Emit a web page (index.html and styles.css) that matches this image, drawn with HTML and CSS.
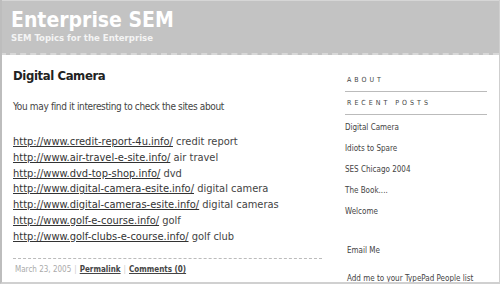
FILE: index.html
```html
<!DOCTYPE html>
<html lang="en">
<head>
  <meta charset="UTF-8">
  <title>Enterprise SEM</title>
  <link rel="stylesheet" href="styles.css">
</head>
<body>
  <div class="page">
    <div class="banner">
      <h1 class="banner-title">Enterprise SEM</h1>
      <div class="banner-sub">SEM Topics for the Enterprise</div>
    </div>

    <div class="layout">
      <div class="content">
        <h2 class="entry-title">Digital Camera</h2>
        <p class="entry-intro">You may find it interesting to check the sites about</p>
        <div class="entry-links">
          <div><a href="#">http://www.credit-report-4u.info/</a> credit report</div>
          <div><a href="#">http://www.air-travel-e-site.info/</a> air travel</div>
          <div><a href="#">http://www.dvd-top-shop.info/</a> dvd</div>
          <div><a href="#">http://www.digital-camera-esite.info/</a> digital camera</div>
          <div><a href="#">http://www.digital-cameras-esite.info/</a> digital cameras</div>
          <div><a href="#">http://www.golf-e-course.info/</a> golf</div>
          <div><a href="#">http://www.golf-clubs-e-course.info/</a> golf club</div>
        </div>
        <div class="entry-footer">
          <span class="date">March 23, 2005</span><span class="sep">|</span><a href="#">Permalink</a><span class="sep">|</span><a href="#">Comments (0)</a>
        </div>
      </div>

      <div class="sidebar">
        <div class="side-head">About</div>
        <div class="side-head">Recent Posts</div>
        <ul class="side-list">
          <li>Digital Camera</li>
          <li>Idiots to Spare</li>
          <li>SES Chicago 2004</li>
          <li>The Book....</li>
          <li>Welcome</li>
        </ul>
        <div class="side-note">Email Me</div>
        <div class="side-note">Add me to your TypePad People list</div>
      </div>
    </div>
  </div>
</body>
</html>
```

FILE: styles.css
```css
body {
  margin: 0;
  background: #fff;
  font-family: "DejaVu Sans Condensed", "DejaVu Sans", sans-serif;
  color: #444;
  overflow: hidden;
}
.page {
  width: 497px;
  height: 282px;
  border-left: 2px solid #bdbdbd;
  border-right: 1px solid #cfcfcf;
  border-bottom: 2px solid #d0d0d0;
  overflow: hidden;
}
.banner {
  background: #c3c3c3;
  border-top: 1px solid #d6d6d6;
  border-bottom: 2px dashed #d8d8d8;
  height: 52px;
  padding-left: 11px;
  margin-left: -2px;
}
.banner-title {
  margin: 0;
  padding-top: 7px;
  font-size: 21px;
  font-weight: bold;
  color: #fff;
  line-height: 24px;
}
.banner-sub {
  font-size: 9.5px;
  font-weight: bold;
  color: #f4f4f4;
  line-height: 11px;
}
.layout {
  display: flex;
  padding-left: 11px;
}
.content {
  width: 309px;
}
.entry-title {
  margin: 12px 0 0;
  font-size: 13px;
  font-weight: bold;
  letter-spacing: -0.4px;
  color: #222;
  line-height: 18px;
}
.entry-intro {
  margin: 15px 0 0;
  font-size: 10px;
  letter-spacing: -0.35px;
  line-height: 14px;
}
.entry-links {
  margin-top: 20px;
  font-size: 11px;
  line-height: 15.8px;
}
.entry-links a {
  color: #333;
}
.entry-footer {
  margin-top: 13px;
  padding: 5px 0 0 2px;
  border-top: 1px dashed #bbb;
  font-size: 8px;
  line-height: 12px;
}
.entry-footer .date {
  color: #aaa;
}
.entry-footer .sep {
  color: #ccc;
  margin: 0 3px;
}
.entry-footer a {
  color: #444;
  font-weight: bold;
}
.sidebar {
  margin-left: 23px;
  width: 142px;
  padding-top: 20px;
  font-size: 8px;
  color: #444;
}
.side-head {
  text-transform: uppercase;
  letter-spacing: 3px;
  font-size: 7px;
  line-height: 10px;
  padding: 0 0 6px 2px;
  border-bottom: 1px solid #bbb;
  margin-bottom: 6px;
}
.side-list {
  list-style: none;
  margin: 8px 0 0;
  padding: 0;
}
.side-list li {
  line-height: 10px;
  margin-bottom: 11px;
}
.side-note {
  margin-top: 29px;
  padding-left: 2px;
  line-height: 10px;
}
.side-note + .side-note {
  margin-top: 18px;
}
```
